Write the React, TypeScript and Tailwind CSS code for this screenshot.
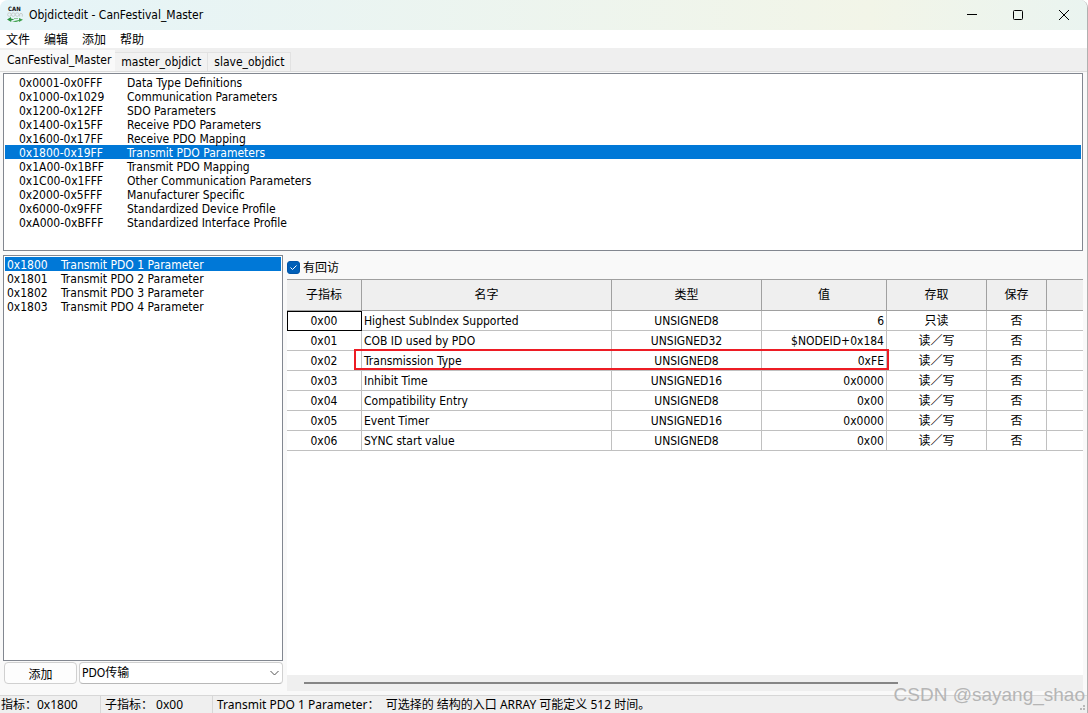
import { useState } from 'react'

const tabs = ['CanFestival_Master', 'master_objdict', 'slave_objdict']

const sections = [
  ['0x0001-0x0FFF', 'Data Type Definitions'],
  ['0x1000-0x1029', 'Communication Parameters'],
  ['0x1200-0x12FF', 'SDO Parameters'],
  ['0x1400-0x15FF', 'Receive PDO Parameters'],
  ['0x1600-0x17FF', 'Receive PDO Mapping'],
  ['0x1800-0x19FF', 'Transmit PDO Parameters'],
  ['0x1A00-0x1BFF', 'Transmit PDO Mapping'],
  ['0x1C00-0x1FFF', 'Other Communication Parameters'],
  ['0x2000-0x5FFF', 'Manufacturer Specific'],
  ['0x6000-0x9FFF', 'Standardized Device Profile'],
  ['0xA000-0xBFFF', 'Standardized Interface Profile'],
]

const indexes = [
  ['0x1800', 'Transmit PDO 1 Parameter'],
  ['0x1801', 'Transmit PDO 2 Parameter'],
  ['0x1802', 'Transmit PDO 3 Parameter'],
  ['0x1803', 'Transmit PDO 4 Parameter'],
]

const rows = [
  { sub: '0x00', name: 'Highest SubIndex Supported', type: 'UNSIGNED8', value: '6', access: '只读', save: '否' },
  { sub: '0x01', name: 'COB ID used by PDO', type: 'UNSIGNED32', value: '$NODEID+0x184', access: '读／写', save: '否' },
  { sub: '0x02', name: 'Transmission Type', type: 'UNSIGNED8', value: '0xFE', access: '读／写', save: '否' },
  { sub: '0x03', name: 'Inhibit Time', type: 'UNSIGNED16', value: '0x0000', access: '读／写', save: '否' },
  { sub: '0x04', name: 'Compatibility Entry', type: 'UNSIGNED8', value: '0x00', access: '读／写', save: '否' },
  { sub: '0x05', name: 'Event Timer', type: 'UNSIGNED16', value: '0x0000', access: '读／写', save: '否' },
  { sub: '0x06', name: 'SYNC start value', type: 'UNSIGNED8', value: '0x00', access: '读／写', save: '否' },
]

function AppIcon() {
  return (
    <svg width="16" height="16" viewBox="0 0 16 16" overflow="visible" aria-hidden="true">
      <text x="1" y="4" fontSize="6" fontWeight="700" fill="#111">CAN</text>
      <g fill="none" stroke="#bfc5c2" strokeWidth="0.8">
        <circle cx="2.4" cy="7.6" r="1.8" />
        <circle cx="6.3" cy="7.6" r="1.8" />
        <circle cx="10.2" cy="7.6" r="1.8" />
        <path d="M12.7 9.6V7q1.3-1.6 2.6 0v2.6" />
      </g>
      <path d="M0 12.4l4-2.4v1.6l3.4.9-3.2.9v1.6z" fill="#2f9440" />
      <path d="M5 14.4l4.5-1 2.5-.4v-2l4 1.8-4 2.2v-1l-3 1z" fill="#3f9f4c" />
      <path d="M7 11h4v1H7z" fill="#8cc795" />
    </svg>
  )
}

function TitleBar() {
  return (
    <header className="flex h-[30px] shrink-0 items-center bg-linear-to-r from-[#e5f4f8] via-[#f2f5e8] via-80% to-[#eaf4f0] pl-[7px]">
      <AppIcon />
      <h1 className="ml-1.5 flex-1">Objdictedit - CanFestival_Master</h1>
      <button aria-label="Minimize" className="flex h-full w-[46px] items-center justify-center">
        <svg width="10" height="10" viewBox="0 0 10 10"><path d="M0 4.5h10" stroke="#000" /></svg>
      </button>
      <button aria-label="Maximize" className="flex h-full w-[46px] items-center justify-center">
        <svg width="10" height="10" viewBox="0 0 10 10"><rect x=".5" y=".5" width="9" height="9" rx="1" fill="none" stroke="#000" /></svg>
      </button>
      <button aria-label="Close" className="flex h-full w-[46px] items-center justify-center">
        <svg width="10" height="10" viewBox="0 0 10 10"><path d="M0 0l10 10M10 0L0 10" stroke="#000" /></svg>
      </button>
    </header>
  )
}

export default function App() {
  const [tab, setTab] = useState(0)
  const [section, setSection] = useState(5)
  const [index, setIndex] = useState(0)

  return (
    <div className="relative flex h-screen flex-col overflow-hidden rounded-t-lg border-r border-[#b0b0b0] bg-[#f9f9f9] font-['DejaVu_Sans_Condensed','Noto_Sans','Noto_Sans_CJK_SC',sans-serif] text-xs text-black">
      <TitleBar />

      <nav className="flex h-[18px] shrink-0 items-center gap-3.5 bg-white pt-0.5 pl-1.5">
        {['文件', '编辑', '添加', '帮助'].map((item) => (
          <button key={item} className="leading-5">{item}</button>
        ))}
      </nav>

      <div role="tablist" className="flex h-6 shrink-0 items-end border-b border-[#dcdcdc] bg-[#efefef]">
        {tabs.map((name, i) => (
          <button
            key={name}
            role="tab"
            aria-selected={tab === i}
            onClick={() => setTab(i)}
            className={
              tab === i
                ? 'h-[21px] bg-[#f9f9f9] pr-1 pb-px pl-[7px] leading-4'
                : 'h-[19px] border-t border-r border-[#e2e2e2] bg-[#f2f2f2] px-1.5 leading-4'
            }
          >
            {name}
          </button>
        ))}
      </div>

      <main className="flex min-h-0 flex-1 flex-col gap-1 pt-px pr-1 pb-0.5 pl-[3px]">
        <ul className="h-[178px] shrink-0 border border-[#828790] bg-white px-px pt-px">
          {sections.map(([range, name], i) => (
            <li key={range}>
              <button
                onClick={() => setSection(i)}
                className={`flex h-3.5 w-full items-center pt-0.5 pl-3.5 leading-[14px] ${section === i ? 'bg-[#0078d7] text-white' : ''}`}
              >
                <span className="w-[108px] text-left">{range}</span>
                {name}
              </button>
            </li>
          ))}
        </ul>

        <div className="flex min-h-0 flex-1 gap-1">
          <section className="flex w-[280px] shrink-0 flex-col">
            <ul className="min-h-0 flex-1 border border-[#828790] bg-white px-px pt-px">
              {indexes.map(([code, name], i) => (
                <li key={code}>
                  <button
                    onClick={() => setIndex(i)}
                    className={`flex h-3.5 w-full items-center pt-0.5 pl-0.5 leading-[14px] ${index === i ? 'bg-[#0078d7] text-white' : ''}`}
                  >
                    <span className="w-[54px] text-left">{code}</span>
                    {name}
                  </button>
                </li>
              ))}
            </ul>
            <div className="flex h-8 gap-0.5 pt-px">
              <button className="ml-px h-[22px] w-[73px] rounded border border-[#d0d0d0] bg-[#fdfdfd] pt-0.5 leading-5">添加</button>
              <div className="relative flex-1">
                <select aria-label="PDO" className="h-[22px] w-full appearance-none rounded-sm border border-[#d0d0d0] border-b-[#b8b8b8] bg-white pl-0.5 leading-5">
                  <option>PDO传输</option>
                </select>
                <svg className="pointer-events-none absolute top-2 right-1" width="9" height="6" viewBox="0 0 9 6">
                  <path d="M.5 1l4 4 4-4" fill="none" stroke="#555" />
                </svg>
              </div>
            </div>
          </section>

          <section className="flex min-w-0 flex-1 flex-col bg-white">
            <label className="flex h-6 shrink-0 items-center gap-[3px] bg-[#f9f9f9]">
              <span className="relative flex">
                <input type="checkbox" defaultChecked className="size-[13px] appearance-none rounded-[3px] border border-[#0055a8] checked:bg-[#005fb8]" />
                <svg className="pointer-events-none absolute top-[3px] left-[3px]" width="7" height="7" viewBox="0 0 7 7">
                  <path d="M.5 3.5L2.5 5.5 6.5 1.5" fill="none" stroke="#fff" />
                </svg>
              </span>
              <span className="pt-0.5">有回访</span>
            </label>

            <div className="relative min-h-0 flex-1 overflow-hidden">
              <table className="w-full table-fixed border-separate border-spacing-0">
                <colgroup>
                  <col className="w-[75px]" />
                  <col className="w-[250px]" />
                  <col className="w-[150px]" />
                  <col className="w-[125px]" />
                  <col className="w-[100px]" />
                  <col className="w-[60px]" />
                  <col />
                </colgroup>
                <thead>
                  <tr className="h-8 bg-[#efefef]">
                    {['子指标', '名字', '类型', '值', '存取', '保存'].map((h) => (
                      <th key={h} className="border-t border-r border-b border-[#a0a0a0] p-0 font-normal">{h}</th>
                    ))}
                    <td className="border-t border-b border-[#a0a0a0]"></td>
                  </tr>
                </thead>
                <tbody>
                  {rows.map((row, i) => (
                    <tr key={row.sub} className="h-5 text-center leading-[18px] *:border-r *:border-b *:border-[#c0c0c0] *:p-0 *:pt-px *:last:border-r-0">
                      <td className={i === 0 ? 'outline -outline-offset-1 outline-black' : ''}>{row.sub}</td>
                      <td><div className="pl-0.5 text-left">{row.name}</div></td>
                      <td>{row.type}</td>
                      <td><div className="pr-0.5 text-right">{row.value}</div></td>
                      <td>{row.access}</td>
                      <td>{row.save}</td>
                      <td></td>
                    </tr>
                  ))}
                </tbody>
              </table>
              {/* highlight around the transmission type entry */}
              <div className="pointer-events-none absolute top-[70px] left-[67px] h-[21px] w-[535px] border-2 border-[#ed1c24]"></div>
            </div>

            <div className="flex h-4 shrink-0 items-center bg-[#efefef] pl-[17px]">
              <div className="h-0.5 w-[594px] bg-[#858585]"></div>
            </div>
            <div className="h-0.5 shrink-0 bg-[#f9f9f9]"></div>
          </section>
        </div>
      </main>

      <footer className="flex h-[18px] shrink-0 border-t border-[#d7d7d7] bg-[#efefef] font-['Noto_Sans','Noto_Sans_CJK_SC',sans-serif] leading-[18px] whitespace-pre">
        <div className="w-[101px] border-r border-[#d7d7d7] pl-px">指标：0x1800</div>
        <div className="w-28 border-r border-[#d7d7d7] pl-1">子指标： 0x00</div>
        <div className="flex-1 pl-1">Transmit PDO 1 Parameter：  可选择的 结构的入口 ARRAY 可能定义 512 时间。</div>
      </footer>

      {/* resize grip */}
      <svg className="absolute right-0.5 bottom-0.5" width="6" height="6" viewBox="0 0 6 6" fill="#b8b8b8" aria-hidden="true">
        <path d="M4 0h2v2H4zM4 3h2v2H4zM1 3h2v2H1z" />
      </svg>
      <div className="absolute right-0.5 bottom-1.5 font-['Liberation_Sans'] text-[19px] leading-6 text-[#b5b5b5]">CSDN @sayang_shao</div>
    </div>
  )
}
